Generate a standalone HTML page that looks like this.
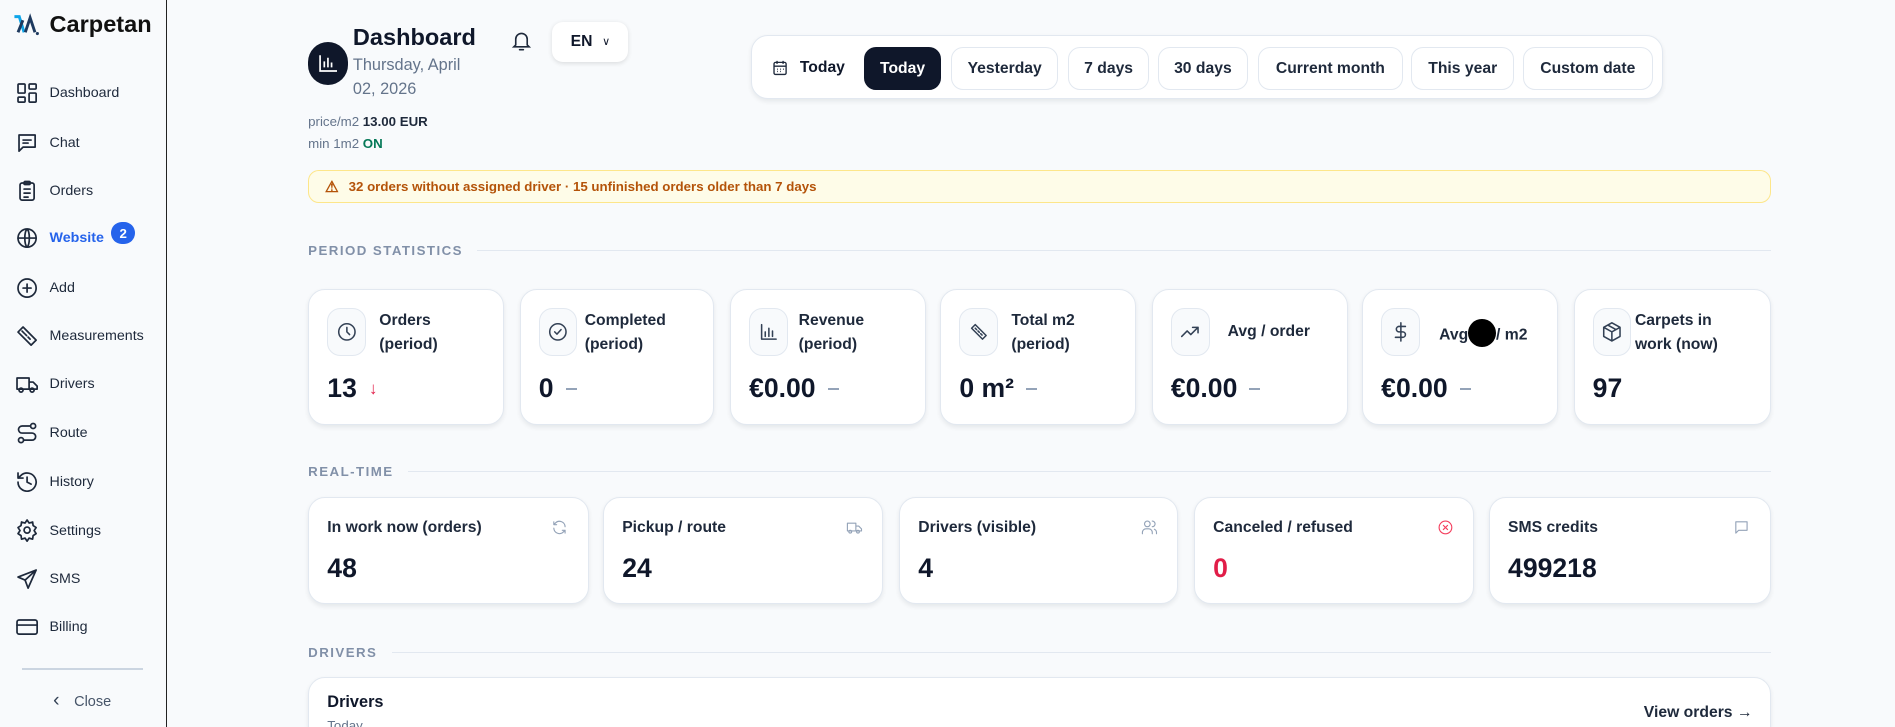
<!DOCTYPE html>
<html><head><meta charset="utf-8"><style>
html{zoom:1.20855;overflow:hidden}
*{box-sizing:border-box;margin:0;padding:0}
body{width:1568px;height:601px;overflow:hidden;background:#f8fafc;font-family:"Liberation Sans",Arial,sans-serif;color:#0f172a;position:relative}
.a{position:absolute}
.side{left:0;top:0;width:138px;height:602px;background:#f8fafc;border-right:1.5px solid #222}
.nav{position:absolute;left:12px;display:flex;align-items:center;font-size:11.8px;color:#1e293b;height:20px}
.nav svg{width:20px;height:20px;margin-right:9px;fill:none;stroke:#1e293b;stroke-width:1.7;stroke-linecap:round;stroke-linejoin:round}
.card{position:absolute;background:#fff;border:1px solid #e2e8f0;border-radius:14px;box-shadow:0 2px 4px rgba(15,23,42,.08)}
.ib{position:absolute;left:15px;top:15px;width:32px;height:40px;border:1px solid #e2e8f0;border-radius:11px;background:#f8fafc;display:flex;align-items:center;justify-content:center}
.ib svg{width:18px;height:18px;fill:none;stroke:#334155;stroke-width:1.7;stroke-linecap:round;stroke-linejoin:round}
.lbl{position:absolute;left:53px;top:16px;font-size:13px;font-weight:bold;color:#1e293b;line-height:19.5px}
.val{position:absolute;left:15px;top:69px;font-size:22px;font-weight:bold;color:#0f172a;display:flex;align-items:center}
.dash{display:inline-block;width:9px;height:1.5px;background:#94a3b8;margin-left:10px}
.sec{position:absolute;left:255px;font-size:11px;font-weight:bold;letter-spacing:1.2px;color:#8190a8;display:flex;align-items:center;width:1210px}
.sec:after{content:"";flex:1;height:1px;background:#e2e8f0;margin-left:12px}
.btn{position:absolute;top:9px;height:36px;border:1px solid #e2e8f0;border-radius:10px;background:#fff;font-size:13px;font-weight:bold;display:flex;align-items:center;justify-content:center;color:#1e293b}
.rt .t{position:absolute;left:15px;top:18px;font-size:13px;font-weight:bold;color:#1e293b}
.rt .v{position:absolute;left:15px;top:46px;font-size:22px;font-weight:bold}
.rt svg{position:absolute;right:16px;top:18px;width:14px;height:14px;fill:none;stroke:#94a3b8;stroke-width:1.6;stroke-linecap:round;stroke-linejoin:round}
</style></head><body>
<div class="a side">
 <svg class="a" style="left:10px;top:11px" width="24" height="20" viewBox="0 0 24 20"><path d="M2 3 L6 3 L10 16" stroke="#0ea5e9" stroke-width="2.4" fill="none"/><path d="M5 16 L9 6 M11 16 L15 4 L19 16" stroke="#1e3a5f" stroke-width="2.4" fill="none"/><circle cx="21" cy="17" r="1.3" fill="#1e3a5f"/></svg>
 <div class="a" style="left:41px;top:9px;font-size:19.5px;font-weight:bold;color:#111">Carpetan</div>
 <div class="nav" style="top:67px"><svg viewBox="0 0 24 24"><rect x="3" y="3" width="7" height="9" rx="1"/><rect x="14" y="3" width="7" height="5" rx="1"/><rect x="14" y="12" width="7" height="9" rx="1"/><rect x="3" y="16" width="7" height="5" rx="1"/></svg>Dashboard</div>
 <div class="nav" style="top:108px"><svg viewBox="0 0 24 24"><path d="M4 4h16v12H8l-4 4z"/><path d="M8 9h8M8 12h5"/></svg>Chat</div>
 <div class="nav" style="top:148px"><svg viewBox="0 0 24 24"><rect x="5" y="4" width="14" height="17" rx="2"/><rect x="9" y="2.5" width="6" height="3" rx="1"/><path d="M9 10h6M9 14h6M9 18h4"/></svg>Orders</div>
 <div class="nav" style="top:187px;color:#2563eb;font-weight:bold"><svg viewBox="0 0 24 24"><circle cx="12" cy="12" r="9"/><path d="M3 12h18M12 3c3 3 3 15 0 18M12 3c-3 3-3 15 0 18"/></svg>Website<span style="display:inline-flex;width:20px;height:18px;border-radius:9px;background:#2563eb;color:#fff;font-size:11px;align-items:center;justify-content:center;margin-left:6px;margin-top:-8px">2</span></div>
 <div class="nav" style="top:228px"><svg viewBox="0 0 24 24"><circle cx="12" cy="12" r="9"/><path d="M12 8v8M8 12h8"/></svg>Add</div>
 <div class="nav" style="top:268px"><svg viewBox="0 0 24 24"><path d="M3 8l5-5 13 13-5 5z"/><path d="M7 7l2 2M10 10l1.5 1.5M13 13l2 2"/></svg>Measurements</div>
 <div class="nav" style="top:308px"><svg viewBox="0 0 24 24"><path d="M2 6h12v11H2zM14 10h4l4 4v3h-8"/><circle cx="6" cy="18" r="2"/><circle cx="17" cy="18" r="2"/></svg>Drivers</div>
 <div class="nav" style="top:348px"><svg viewBox="0 0 24 24"><circle cx="6" cy="19" r="2.5"/><circle cx="18" cy="5" r="2.5"/><path d="M15.5 5H7a3.5 3.5 0 0 0 0 7h10a3.5 3.5 0 0 1 0 7H8.5"/></svg>Route</div>
 <div class="nav" style="top:389px"><svg viewBox="0 0 24 24"><path d="M3 12a9 9 0 1 0 3-6.7L3 8M3 3v5h5M12 7v5l4 2"/></svg>History</div>
 <div class="nav" style="top:429px"><svg viewBox="0 0 24 24"><circle cx="12" cy="12" r="3"/><path d="M12 2l2 3 3.5-1 .5 3.5 3 2-2 3 2 3-3 2-.5 3.5-3.5-1-2 3-2-3-3.5 1-.5-3.5-3-2 2-3-2-3 3-2 .5-3.5 3.5 1z"/></svg>Settings</div>
 <div class="nav" style="top:469px"><svg viewBox="0 0 24 24"><path d="M21 3L3 10l7 3 3 8z M10 13l11-10"/></svg>SMS</div>
 <div class="nav" style="top:509px"><svg viewBox="0 0 24 24"><rect x="2" y="5" width="20" height="14" rx="2"/><path d="M2 10h20"/></svg>Billing</div>
 <div class="a" style="left:18px;top:553px;width:100px;height:1px;background:#cbd5e1"></div>
 <div class="a" style="left:44px;top:571px;font-size:12px;color:#475569"><span style="font-size:16px;margin-right:12px;color:#334155">&#x2039;</span>Close</div>
</div>

<div class="a" style="left:255px;top:35px;width:33px;height:35px;border-radius:17px;background:#0f172a"><svg width="33" height="35" viewBox="0 0 33 35" fill="none" stroke="#fff" stroke-width="1.4"><path d="M10 11v13h14M13.5 21v-5M16.5 21v-8M19.5 21v-4"/></svg></div>
<div class="a" style="left:292px;top:20px;font-size:19.5px;font-weight:bold">Dashboard</div>
<div class="a" style="left:292px;top:44px;font-size:13.5px;color:#64748b;line-height:20px">Thursday, April<br>02, 2026</div>
<svg class="a" style="left:422px;top:24px" width="19" height="20" viewBox="0 0 24 24" fill="none" stroke="#1e293b" stroke-width="1.7" stroke-linecap="round"><path d="M6 16V10a6 6 0 0 1 12 0v6l2 2H4zM10 21h4"/></svg>
<div class="a" style="left:457px;top:18px;width:63px;height:33px;border-radius:9px;background:#fff;box-shadow:0 1px 4px rgba(0,0,0,.12);font-size:13px;font-weight:bold;display:flex;align-items:center;justify-content:center">EN <span style="font-size:9px;margin-left:8px;font-weight:normal">&#x2228;</span></div>
<div class="a" style="left:255px;top:92px;font-size:11px;color:#64748b;line-height:18px">price/m2 <b style="color:#1e293b">13.00 EUR</b><br>min 1m2 <b style="color:#047857">ON</b></div>

<div class="a" style="left:621px;top:29px;width:755px;height:53px;background:#fff;border:1px solid #e2e8f0;border-radius:14px;box-shadow:0 2px 4px rgba(15,23,42,.08)">
 <svg class="a" style="left:16px;top:18px" width="15" height="16" viewBox="0 0 24 24" fill="none" stroke="#1e293b" stroke-width="1.8"><rect x="4" y="5" width="16" height="16" rx="2"/><path d="M8 3v4M16 3v4M4 10h16M8 14h1M12 14h1M16 14h1M8 17h1M12 17h1"/></svg>
 <div class="a" style="left:40px;top:19px;font-size:13px;font-weight:bold">Today</div>
 <div class="btn" style="left:93px;width:64px;background:#0f172a;color:#fff;border-color:#0f172a">Today</div>
 <div class="btn" style="left:165px;width:89px">Yesterday</div>
 <div class="btn" style="left:262px;width:67px">7 days</div>
 <div class="btn" style="left:336px;width:75px">30 days</div>
 <div class="btn" style="left:419px;width:120px">Current month</div>
 <div class="btn" style="left:546px;width:85px">This year</div>
 <div class="btn" style="left:638px;width:108px">Custom date</div>
</div>

<div class="a" style="left:255px;top:141px;width:1210px;height:27px;background:#fefce8;border:1px solid #fde68a;border-radius:9px;font-size:11px;font-weight:bold;color:#b45309;display:flex;align-items:center;padding-left:13px"><span style="font-size:13px;margin-right:8px">&#x26A0;</span>32 orders without assigned driver · 15 unfinished orders older than 7 days</div>

<div class="sec" style="top:201px">PERIOD STATISTICS</div>

<div class="card" style="left:255px;top:239px;width:162px;height:113px"><div class="ib"><svg viewBox="0 0 24 24"><circle cx="12" cy="12" r="9"/><path d="M12 7v5l3 3"/></svg></div><div class="lbl" style="left:58px">Orders<br>(period)</div><div class="val">13<span style="color:#e11d48;font-size:14px;margin-left:10px;font-weight:normal">&#x2193;</span></div></div>
<div class="card" style="left:430px;top:239px;width:161px;height:113px"><div class="ib"><svg viewBox="0 0 24 24"><circle cx="12" cy="12" r="9"/><path d="M8.5 12l2.5 2.5 4.5-5"/></svg></div><div class="lbl">Completed<br>(period)</div><div class="val">0<span class="dash"></span></div></div>
<div class="card" style="left:604px;top:239px;width:162px;height:113px"><div class="ib"><svg viewBox="0 0 24 24"><path d="M4 4v16h16M8 17v-5M12 17V8M16 17v-6"/></svg></div><div class="lbl" style="left:56px">Revenue<br>(period)</div><div class="val">€0.00<span class="dash"></span></div></div>
<div class="card" style="left:778px;top:239px;width:162px;height:113px"><div class="ib"><svg viewBox="0 0 24 24"><path d="M4 8l4-4 12 12-4 4z"/><path d="M8 8l1.5 1.5M11 11l1.5 1.5M14 14l1.5 1.5"/></svg></div><div class="lbl" style="left:58px">Total m2<br>(period)</div><div class="val">0 m²<span class="dash"></span></div></div>
<div class="card" style="left:953px;top:239px;width:162px;height:113px"><div class="ib"><svg viewBox="0 0 24 24"><path d="M3 17l6-6 4 4 8-8M15 7h6v6"/></svg></div><div class="lbl" style="left:62px;top:25px">Avg / order</div><div class="val">€0.00<span class="dash"></span></div></div>
<div class="card" style="left:1127px;top:239px;width:162px;height:113px"><div class="ib"><svg viewBox="0 0 24 24"><path d="M12 2v20M17 6H10a3 3 0 0 0 0 6h4a3 3 0 0 1 0 6H6"/></svg></div><div class="lbl" style="left:63px;top:24px">Avg<span style="display:inline-block;width:23px;height:23px;border-radius:50%;background:#000;vertical-align:-6px"></span>/ m2</div><div class="val">€0.00<span class="dash"></span></div></div>
<div class="card" style="left:1302px;top:239px;width:163px;height:113px"><div class="ib"><svg viewBox="0 0 24 24"><path d="M12 2l9 5v10l-9 5-9-5V7z M3 7l9 5 9-5M12 12v10M7.5 4.5l9 5"/></svg></div><div class="lbl" style="left:50px">Carpets in<br>work (now)</div><div class="val">97</div></div>

<div class="sec" style="top:384px">REAL-TIME</div>

<div class="card rt" style="left:255px;top:411px;width:232px;height:89px"><div class="t">In work now (orders)</div><svg viewBox="0 0 24 24"><path d="M20 11a8 8 0 0 0-14-5L4 8M4 4v4h4M4 13a8 8 0 0 0 14 5l2-2M20 20v-4h-4"/></svg><div class="v">48</div></div>
<div class="card rt" style="left:499px;top:411px;width:232px;height:89px"><div class="t">Pickup / route</div><svg viewBox="0 0 24 24"><path d="M2 6h12v11H2zM14 10h4l4 4v3h-8"/><circle cx="6" cy="18" r="2"/><circle cx="17" cy="18" r="2"/></svg><div class="v">24</div></div>
<div class="card rt" style="left:744px;top:411px;width:231px;height:89px"><div class="t">Drivers (visible)</div><svg viewBox="0 0 24 24"><circle cx="9" cy="7" r="4"/><path d="M2 21v-2a5 5 0 0 1 5-5h4a5 5 0 0 1 5 5v2M16 3a4 4 0 0 1 0 8M22 21v-2a5 5 0 0 0-3-4.5"/></svg><div class="v">4</div></div>
<div class="card rt" style="left:988px;top:411px;width:232px;height:89px"><div class="t">Canceled / refused</div><svg viewBox="0 0 24 24" style="stroke:#f43f5e"><circle cx="12" cy="12" r="9"/><path d="M9 9l6 6M15 9l-6 6"/></svg><div class="v" style="color:#e11d48">0</div></div>
<div class="card rt" style="left:1232px;top:411px;width:233px;height:89px"><div class="t">SMS credits</div><svg viewBox="0 0 24 24"><path d="M4 4h16v12H8l-4 4z"/></svg><div class="v">499218</div></div>

<div class="sec" style="top:534px">DRIVERS</div>

<div class="card" style="left:255px;top:560px;width:1210px;height:55px"><div class="a" style="left:15px;top:13px;font-size:13.5px;font-weight:bold">Drivers</div><div class="a" style="left:15px;top:33px;font-size:11px;color:#64748b">Today</div><div class="a" style="right:14px;top:22px;font-size:13px;font-weight:bold;color:#1e293b">View orders &#x2192;</div></div>
</body></html>
